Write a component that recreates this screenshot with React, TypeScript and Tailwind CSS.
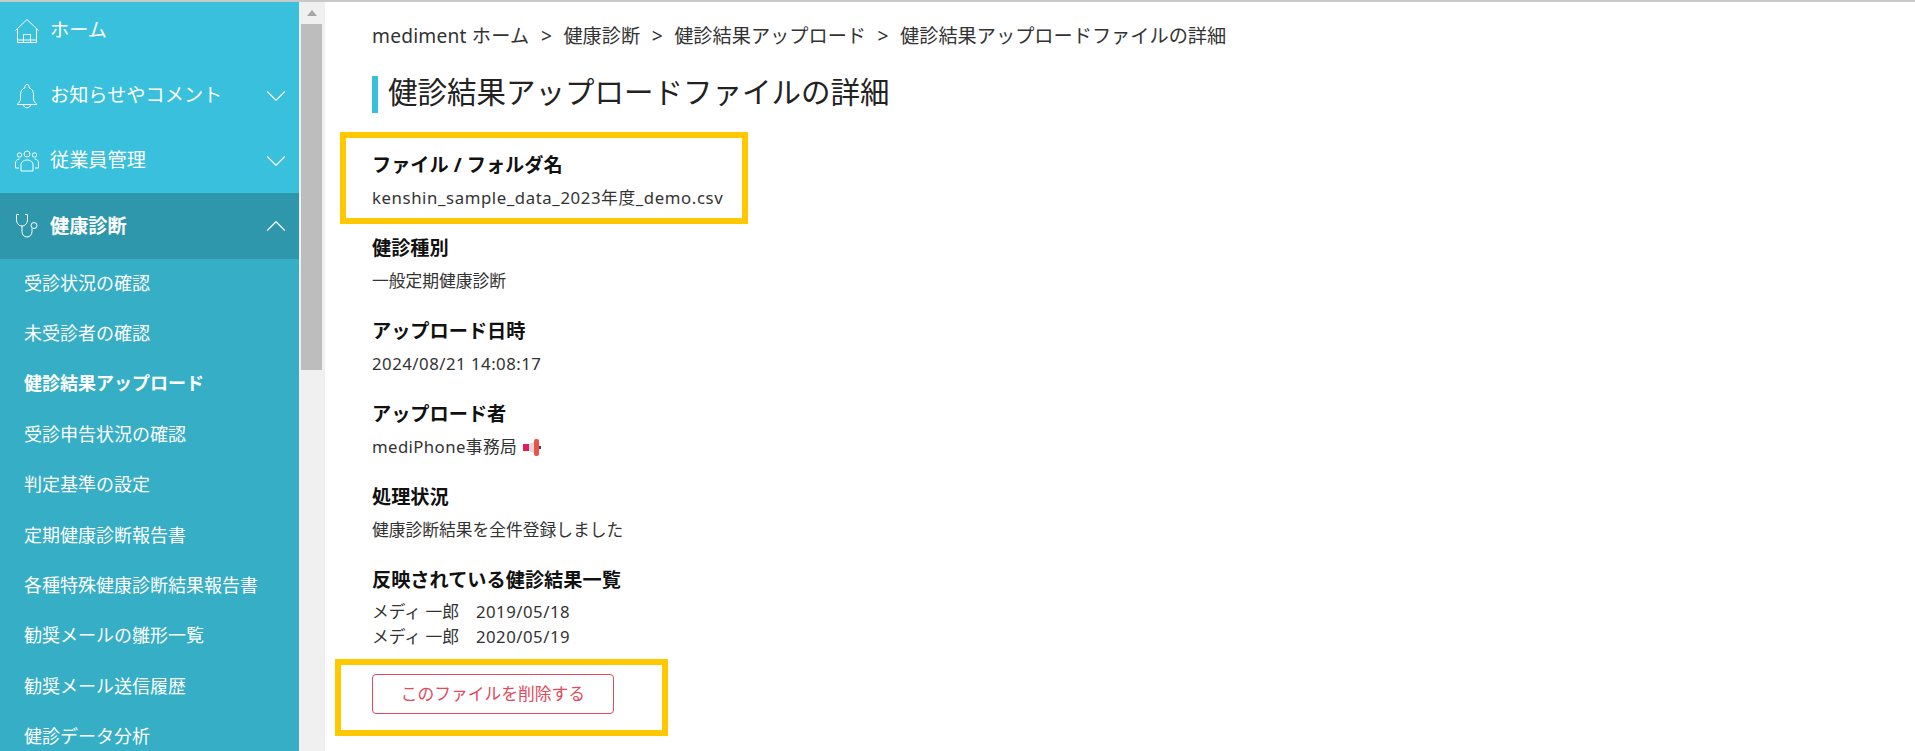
import { ChevronDown, ChevronUp } from "lucide-react";
import type { ReactNode } from "react";

const subItems = [
  "受診状況の確認",
  "未受診者の確認",
  "健診結果アップロード",
  "受診申告状況の確認",
  "判定基準の設定",
  "定期健康診断報告書",
  "各種特殊健康診断結果報告書",
  "勧奨メールの雛形一覧",
  "勧奨メール送信履歴",
  "健診データ分析",
];

const crumbs = ["健康診断", "健診結果アップロード", "健診結果アップロードファイルの詳細"];

const HomeIcon = () => (
  <svg width="26" height="26" viewBox="0 0 26 26" fill="none" stroke="white" strokeWidth="1">
    <path d="M1.500 12.500L13 1.500l11.500 11" />
    <path d="M3.500 11v13.500h19V11" />
    <path d="M9.500 24.500v-8h7v8" />
    <path d="M3.500 22h19" />
  </svg>
);

const BellIcon = () => (
  <svg width="26" height="26" viewBox="0 0 26 26" fill="none" stroke="white" strokeWidth="1">
    <path d="M13 1.500a2 2 0 0 1 2 2v1.200c3 1 4.500 3.500 4.500 7v4c0 2.500 1.500 4 3.500 5.800H3c2-1.800 3.500-3.300 3.500-5.800v-4c0-3.500 1.500-6 4.500-7V3.500a2 2 0 0 1 2-2z" />
    <path d="M9.500 21.500c0 2 1.500 3.300 3.500 3.300s3.500-1.300 3.500-3.300" />
  </svg>
);

const UsersIcon = () => (
  <svg width="26" height="26" viewBox="0 0 26 26" fill="none" stroke="white" strokeWidth="1">
    <circle cx="13" cy="6" r="3" />
    <circle cx="5.500" cy="7" r="2.200" />
    <circle cx="20.500" cy="7" r="2.200" />
    <path d="M7 23v-6c0-3 2.500-5 6-5s6 2 6 5v6z" />
    <path d="M5 20H1.500v-5c0-2 1.500-4 4-4" />
    <path d="M21 20h3.500v-5c0-2-1.500-4-4-4" />
  </svg>
);

const StethoscopeIcon = () => (
  <svg width="26" height="26" viewBox="0 0 26 26" fill="none" stroke="white" strokeWidth="1">
    <path d="M5 1.500H2.500v5c0 4 2.500 6.500 5.500 6.500s5.500-2.500 5.500-6.500v-5H11" />
    <path d="M8 13v5.500c0 3 2 5.500 5 5.500s5-2.500 5-5.500v-3" />
    <circle cx="20" cy="12.500" r="3" />
  </svg>
);

const Megaphone = () => (
  <svg width="18" height="17" viewBox="0 0 18 17">
    <rect x="0" y="5" width="6" height="7" fill="#dc1f5c" />
    <path d="M6 5l5-2v11l-5-2z" fill="#d9d9d9" />
    <rect x="11" y="0" width="5" height="17" rx="2" fill="#f0504a" />
    <rect x="16" y="7" width="2" height="3" fill="#444" />
  </svg>
);

const NavRow = ({
  icon,
  label,
  chevron,
  active,
  className,
}: {
  icon: ReactNode;
  label: string;
  chevron?: "up" | "down";
  active?: boolean;
  className: string;
}) => (
  <div className={`flex items-center pr-[6px] pl-[14px] text-white ${className} ${active ? "bg-[#2f97ab]" : ""}`}>
    <span className="flex w-[26px] justify-center">{icon}</span>
    <span className={`ml-[10px] flex-1 text-[19.200px] ${active ? "font-bold" : ""}`}>{label}</span>
    {chevron === "down" && <ChevronDown size={34} strokeWidth={0.800} />}
    {chevron === "up" && <ChevronUp size={34} strokeWidth={0.800} />}
  </div>
);

const Field = ({ label, children, wide }: { label: string; children: ReactNode; wide?: number }) => (
  <div className="mb-[17px]">
    <div className="h-[34px] text-[19.200px] leading-[34px] font-bold text-[#111]">{label}</div>
    <div className={`h-[32px] text-[16.750px] leading-[32px] text-[#333] ${wide === 2 ? "tracking-[0.600px]" : wide === 1 ? "tracking-[0.500px]" : ""}`}>
      {children}
    </div>
  </div>
);

export default function App() {
  return (
    <div className="flex h-[751px] w-[1915px] flex-col overflow-hidden bg-white font-['Noto_Sans','Noto_Sans_CJK_JP',sans-serif]">
      <div className="h-[2px] shrink-0 bg-[#c8c8c8]" />
      <div className="flex min-h-0 flex-1">
        <aside className="w-[299px] shrink-0 bg-[#35aec6]">
          <div className="bg-[#38c0dc]">
            <NavRow className="h-[61px] pb-[4px]" icon={<HomeIcon />} label="ホーム" />
            <NavRow className="h-[65px]" icon={<BellIcon />} label="お知らせやコメント" chevron="down" />
            <NavRow className="h-[65px]" icon={<UsersIcon />} label="従業員管理" chevron="down" />
          </div>
          <NavRow className="h-[66px]" icon={<StethoscopeIcon />} label="健康診断" chevron="up" active />
          <ul>
            {subItems.map((item) => (
              <li
                key={item}
                className={`flex h-[50.400px] items-center pb-[2px] pl-[24px] text-[18px] text-white ${item === "健診結果アップロード" ? "font-bold" : ""}`}
              >
                {item}
              </li>
            ))}
          </ul>
        </aside>

        <div className="flex w-[26px] shrink-0 flex-col bg-[#f0f0f0] pr-[3px] pl-[2px]">
          <div className="flex h-[22px] items-center justify-center">
            <div className="h-0 w-0 border-x-[5px] border-b-[6px] border-x-transparent border-b-[#a6a6a6]" />
          </div>
          <div className="h-[346px] bg-[#bdbdbd]" />
        </div>

        <main className="min-w-0 flex-1 pl-[47px]">
          <nav className="flex h-[66px] items-center gap-[11.500px] pt-[3px] text-[19.200px] whitespace-pre text-[#333]">
            <span className="tracking-[0.200px]">mediment ホーム</span>
            {crumbs.map((crumb) => (
              <span key={crumb} className="flex items-center gap-[11.500px]">
                <span>&gt;</span>
                <span>{crumb}</span>
              </span>
            ))}
          </nav>
          <h1 className="mt-[8px] flex h-[37px] items-center border-l-[6px] border-[#38c0dc] pb-[4px] pl-[10px] text-[29.500px] font-normal text-[#222]">
            健診結果アップロードファイルの詳細
          </h1>
          <div className="relative mt-[35px] w-[352px]">
            <Field label="ファイル / フォルダ名" wide={2}>
              kenshin_sample_data_2023年度_demo.csv
            </Field>
            <div className="absolute top-[-16px] right-[-24px] bottom-[-10px] left-[-32px] border-[6px] border-[#ffc800]" />
          </div>
          <Field label="健診種別">一般定期健康診断</Field>
          <Field label="アップロード日時" wide={1}>
            2024/08/21 14:08:17
          </Field>
          <Field label="アップロード者">
            <span className="flex items-center gap-[6px] tracking-[0.400px]">
              mediPhone事務局 <Megaphone />
            </span>
          </Field>
          <Field label="処理状況">健康診断結果を全件登録しました</Field>
          <div className="h-[34px] text-[19.200px] leading-[34px] font-bold text-[#111]">反映されている健診結果一覧</div>
          <div className="pt-[2px] text-[16.750px] leading-[25px] text-[#333]">
            <div className="flex gap-[17px]">
              <span>メディ 一郎</span>
              <span className="tracking-[0.500px]">2019/05/18</span>
            </div>
            <div className="flex gap-[17px]">
              <span>メディ 一郎</span>
              <span className="tracking-[0.500px]">2020/05/19</span>
            </div>
          </div>
          <div className="relative mt-[25px] w-fit">
            <button className="flex h-[40px] w-[242px] items-center justify-center rounded-[4px] border border-[#e2495b] text-[16.750px] text-[#e2495b]">
              このファイルを削除する
            </button>
            <div className="absolute top-[-15px] right-[-54px] bottom-[-22px] left-[-37px] border-[6px] border-[#ffc800]" />
          </div>
        </main>
      </div>
    </div>
  );
}
